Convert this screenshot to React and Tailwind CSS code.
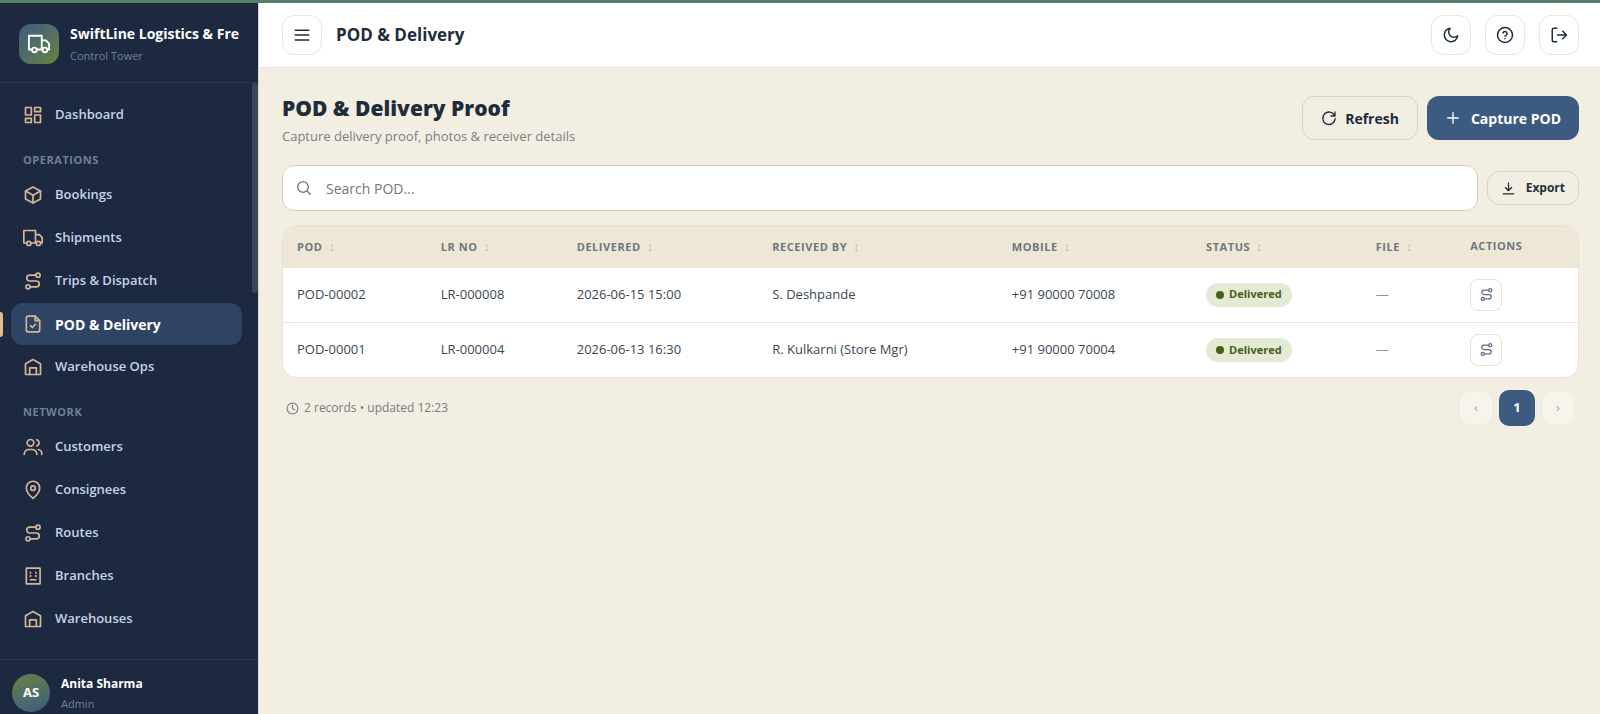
import React, { useState } from 'react';

const icons = {
  dashboard: (
    <>
      <rect x="3" y="3" width="7" height="9" />
      <rect x="14" y="3" width="7" height="5" />
      <rect x="14" y="12" width="7" height="9" />
      <rect x="3" y="16" width="7" height="5" />
    </>
  ),
  box: (
    <>
      <path d="M12 2.5l9 4.8v9.4l-9 4.8-9-4.8V7.300z" />
      <path d="M3 7.300l9 4.900 9-4.900M12 12.200v9.300" />
    </>
  ),
  truck: (
    <>
      <path d="M4.500 18H1V3h14v15H9.500M15 8h4.500L23 11.500V18h-1.500M15 18h1" />
      <circle cx="7" cy="18.500" r="2.500" />
      <circle cx="18.500" cy="18.500" r="2.500" />
    </>
  ),
  route: (
    <>
      <circle cx="6" cy="19" r="2.500" />
      <circle cx="18" cy="5" r="2.500" />
      <path d="M8.500 19H16a3.500 3.500 0 0 0 0-7H8a3.500 3.500 0 0 1 0-7h7.500" />
    </>
  ),
  pod: (
    <>
      <path d="M14.500 2.500H6a2 2 0 0 0-2 2v15a2 2 0 0 0 2 2h12a2 2 0 0 0 2-2V8z" />
      <path d="M14.500 2.500V8H20M9 14l2.200 2.200L15 12.500" />
    </>
  ),
  warehouse: (
    <>
      <path d="M3 21V8l9-5 9 5v13z" />
      <path d="M8 21v-8h8v8" />
    </>
  ),
  users: (
    <>
      <circle cx="9" cy="7" r="4" />
      <path d="M1.500 21v-1a6 6 0 0 1 6-5h3a6 6 0 0 1 6 5v1M16.500 3.200a4 4 0 0 1 0 7.600M18.500 15a5 5 0 0 1 4 5v1" />
    </>
  ),
  pin: (
    <>
      <path d="M12 22s8-6.500 8-12.500a8 8 0 0 0-16 0C4 15.500 12 22 12 22z" />
      <circle cx="12" cy="9.800" r="2.700" />
    </>
  ),
  building: (
    <>
      <rect x="4" y="2.500" width="16.500" height="19" rx="0.500" />
      <path d="M9 7.500v1M15.500 7.500v1M9 11.500v1M15.500 11.500v1M9 16.500h6.500" />
    </>
  ),
  menu: <path d="M3 5.500h18M3 12h18M3 18.500h18" />,
  moon: <path d="M21 13A9 9 0 1 1 11 3a7 7 0 0 0 10 10z" />,
  help: (
    <>
      <circle cx="12" cy="12" r="10" />
      <path d="M9.200 9.200a2.900 2.900 0 0 1 5.600 1c0 1.900-2.800 2.300-2.800 3.800M12 17v.1" />
    </>
  ),
  logout: <path d="M9 21H5a2 2 0 0 1-2-2V5a2 2 0 0 1 2-2h4M10 12h12M17 7l5 5-5 5" />,
  refresh: <path d="M20.500 8.500A9.300 9.300 0 1 0 21.300 13M21 3v6h-6" />,
  plus: <path d="M12 4v16M4 12h16" />,
  download: <path d="M12 3v12M7 10.500l5 5 5-5M3.500 20.500h17" />,
  search: (
    <>
      <circle cx="10.500" cy="10.500" r="8" />
      <path d="M16.500 16.500l5 5" />
    </>
  ),
  clock: (
    <>
      <circle cx="12" cy="12" r="10" />
      <path d="M12 6v6l4 2.500" />
    </>
  ),
};

const Icon = ({ name, className }) => (
  <svg
    viewBox="0 0 24 24"
    fill="none"
    stroke="currentColor"
    strokeWidth="2"
    strokeLinecap="round"
    strokeLinejoin="round"
    aria-hidden="true"
    className={className}
  >
    {icons[name]}
  </svg>
);

const menu = [
  { title: '', items: [{ label: 'Dashboard', icon: 'dashboard' }] },
  {
    title: 'Operations',
    items: [
      { label: 'Bookings', icon: 'box' },
      { label: 'Shipments', icon: 'truck' },
      { label: 'Trips & Dispatch', icon: 'route' },
      { label: 'POD & Delivery', icon: 'pod', active: true },
      { label: 'Warehouse Ops', icon: 'warehouse' },
    ],
  },
  {
    title: 'Network',
    items: [
      { label: 'Customers', icon: 'users' },
      { label: 'Consignees', icon: 'pin' },
      { label: 'Routes', icon: 'route' },
      { label: 'Branches', icon: 'building' },
      { label: 'Warehouses', icon: 'warehouse' },
    ],
  },
];

const columns = [
  { label: 'POD', width: 'w-[11.1%]' },
  { label: 'LR No', width: 'w-[10.5%]' },
  { label: 'Delivered', width: 'w-[15.1%]' },
  { label: 'Received By', width: 'w-[18.5%]' },
  { label: 'Mobile', width: 'w-[15%]' },
  { label: 'Status', width: 'w-[13.1%]' },
  { label: 'File', width: 'w-[7.3%]' },
];

const records = [
  { pod: 'POD-00002', lr: 'LR-000008', delivered: '2026-06-15 15:00', receivedBy: 'S. Deshpande', mobile: '+91 90000 70008' },
  { pod: 'POD-00001', lr: 'LR-000004', delivered: '2026-06-13 16:30', receivedBy: 'R. Kulkarni (Store Mgr)', mobile: '+91 90000 70004' },
];

const Sidebar = () => (
  <aside className="flex w-[259px] shrink-0 flex-col border-r border-[#d9d6cb] bg-[#1c2940]">
    <div className="flex h-20 shrink-0 items-center gap-[11px] border-b border-[#2c3950] pt-[2px] pr-3 pl-[19px]">
      <div className="flex size-10 shrink-0 items-center justify-center rounded-xl bg-linear-to-br from-[#3d5a80] to-[#6a8239] text-white">
        <Icon name="truck" className="size-[22px]" />
      </div>
      <div>
        <p className="text-[14px] leading-6 font-bold whitespace-nowrap text-white">SwiftLine Logistics &amp; Fre</p>
        <p className="text-[11px] leading-5 text-[#71809a]">Control Tower</p>
      </div>
    </div>

    <div className="flex min-h-0 flex-1">
      <nav className="flex-1 overflow-hidden pt-[11px] pr-[10px] pl-[11px]">
        {menu.map((group) => (
          <div key={group.title}>
            {group.title && (
              <h2 className="px-3 pt-[13px] pb-1 text-[11px] leading-5 font-bold tracking-wider text-[#71809a] uppercase">
                {group.title}
              </h2>
            )}
            {group.items.map((item) => (
              <a
                key={item.label}
                href="#"
                aria-current={item.active ? 'page' : undefined}
                className={
                  item.active
                    ? 'relative mb-px flex h-[42px] items-center gap-3 rounded-xl bg-[#2e4462] px-3 text-[14px] font-bold text-white'
                    : 'mb-px flex h-[42px] items-center gap-3 rounded-xl px-3 text-[13px] font-semibold text-[#c6d3e8]'
                }
              >
                {item.active && <span className="absolute top-[9px] -left-[11px] h-[25px] w-[3px] rounded-r bg-[#e2bd8c]" />}
                <Icon name={item.icon} className="size-5 text-[#d4b896]" />
                {item.label}
              </a>
            ))}
          </div>
        ))}
      </nav>
      <div className="w-[6px] shrink-0">
        <div className="h-[210px] rounded-full bg-[#3a475a]" />
      </div>
    </div>

    <div className="flex h-[55px] shrink-0 gap-[11px] overflow-hidden border-t border-[#2c3950] pt-[14px] pl-3">
      <div className="flex size-[38px] shrink-0 items-center justify-center rounded-full bg-linear-160 from-[#6a8239] to-[#3d5a80] text-[13px] font-bold text-white">
        AS
      </div>
      <div>
        <p className="text-[12px] leading-5 font-bold text-white">Anita Sharma</p>
        <p className="text-[11px] leading-5 text-[#71809a]">Admin</p>
      </div>
    </div>
  </aside>
);

const TopButton = ({ label, icon }) => (
  <button
    type="button"
    aria-label={label}
    className="flex size-10 items-center justify-center rounded-xl border border-[#ebe6d8] bg-white text-[#1f2d3a]"
  >
    <Icon name={icon} className="size-[18px]" />
  </button>
);

const App = () => {
  const [search, setSearch] = useState('');

  return (
    <div className="flex h-screen flex-col bg-[#f2eee1] font-['Open_Sans','Noto_Sans',sans-serif] text-[#1f2d3a]">
      <div className="h-[3px] shrink-0 bg-[#54806a]" />
      <div className="flex min-h-0 flex-1">
        <Sidebar />
        <div className="flex min-w-0 flex-1 flex-col">
          <header className="flex h-[65px] shrink-0 items-center gap-[14px] border-b border-[#ebe6d8] bg-white pr-[21px] pl-[23px]">
            <TopButton label="Toggle menu" icon="menu" />
            <p className="flex-1 text-[17px] font-bold">POD &amp; Delivery</p>
            <TopButton label="Dark mode" icon="moon" />
            <TopButton label="Help" icon="help" />
            <TopButton label="Log out" icon="logout" />
          </header>

          <main className="flex-1 overflow-hidden pt-7 pr-[21px] pl-[23px]">
            <div className="flex items-start justify-between">
              <div>
                <h1 className="text-[21px] leading-6 font-extrabold">POD &amp; Delivery Proof</h1>
                <p className="text-[13px] leading-8 text-[#7a8084]">Capture delivery proof, photos &amp; receiver details</p>
              </div>
              <div className="flex gap-[9px]">
                <button type="button" className="flex h-[44px] items-center gap-2 rounded-xl border border-[#d9d3c3] px-[18px] text-[14px] font-bold">
                  <Icon name="refresh" className="size-4" />
                  Refresh
                </button>
                <button type="button" className="flex h-[44px] items-center gap-[10px] rounded-xl bg-[#3d5a80] px-[18px] text-[14px] font-bold text-white">
                  <Icon name="plus" className="size-4" />
                  Capture POD
                </button>
              </div>
            </div>

            <div className="mt-[13px] flex items-center gap-[9px]">
              <label className="flex h-[46px] flex-1 items-center gap-[14px] rounded-xl border border-[#d5d1c2] bg-white px-[13px]">
                <Icon name="search" className="size-4 text-[#6b7680]" />
                <input
                  type="text"
                  aria-label="Search POD"
                  placeholder="Search POD..."
                  value={search}
                  onChange={(e) => setSearch(e.target.value)}
                  className="flex-1 text-[14px] outline-none placeholder:text-[#757575]"
                />
              </label>
              <button type="button" className="flex h-[34px] items-center gap-[10px] rounded-xl border border-[#d9d3c3] px-[13px] text-[12px] font-bold">
                <Icon name="download" className="size-[15px]" />
                Export
              </button>
            </div>

            <div className="mt-[14px] overflow-hidden rounded-[14px] border border-[#e8e2d2] bg-white">
              <table className="w-full table-fixed text-left text-[13px]">
                <thead className="bg-[#efe7d6] text-[11px] tracking-wider text-[#6b7680] uppercase">
                  <tr className="h-[41px] border-b border-[#ebe6d8]">
                    {columns.map((col) => (
                      <th key={col.label} className={`${col.width} px-[14px] font-bold whitespace-nowrap`}>
                        {col.label}
                        <span className="ml-[6px] text-[13px] leading-4 font-normal text-[#bcb9ae]">↕</span>
                      </th>
                    ))}
                    <th className="px-[14px] font-bold">Actions</th>
                  </tr>
                </thead>
                <tbody className="text-[#3a4754]">
                  {records.map((r) => (
                    <tr key={r.pod} className="h-[55px] border-b border-[#ebe6d8] last:border-b-0">
                      <td className="px-[14px]">{r.pod}</td>
                      <td className="px-[14px]">{r.lr}</td>
                      <td className="px-[14px]">{r.delivered}</td>
                      <td className="px-[14px]">{r.receivedBy}</td>
                      <td className="px-[14px]">{r.mobile}</td>
                      <td className="px-[14px]">
                        <span className="inline-flex h-6 items-center gap-[5px] rounded-full bg-[#e4ead3] px-[10px] text-[11px] font-bold text-[#46611a]">
                          <span className="size-2 rounded-full bg-[#46611a]" />
                          Delivered
                        </span>
                      </td>
                      <td className="px-[14px] text-[#8a9598]">—</td>
                      <td className="px-[14px]">
                        <button
                          type="button"
                          aria-label={`Track ${r.pod}`}
                          className="flex size-8 items-center justify-center rounded-lg border border-[#e8e2d2] text-[#5f6d7c]"
                        >
                          <Icon name="route" className="size-[15px]" />
                        </button>
                      </td>
                    </tr>
                  ))}
                </tbody>
              </table>
            </div>

            <div className="mt-3 flex items-center justify-between px-1">
              <p className="flex items-center gap-[5px] text-[12px] text-[#757d80]">
                <Icon name="clock" className="size-[13px]" />
                2 records • updated 12:23
              </p>
              <div className="flex items-center gap-[6px]">
                <button type="button" disabled aria-label="Previous page" className="size-[34px] rounded-[10px] border border-[#efebdf] bg-[#f7f4ec] text-[13px] text-[#a0a3a2]">
                  ‹
                </button>
                <button type="button" className="size-9 rounded-[10px] bg-[#3d5a80] text-[13px] font-bold text-white">
                  1
                </button>
                <button type="button" disabled aria-label="Next page" className="size-[34px] rounded-[10px] border border-[#efebdf] bg-[#f7f4ec] text-[13px] text-[#a0a3a2]">
                  ›
                </button>
              </div>
            </div>
          </main>
        </div>
      </div>
    </div>
  );
};

export default App;
